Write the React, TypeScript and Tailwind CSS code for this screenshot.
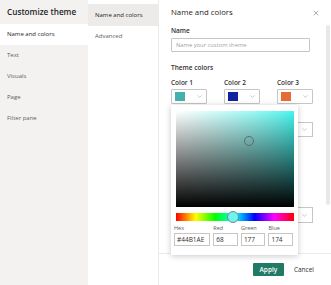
import { X, ChevronDown } from 'lucide-react'

const navItems = ['Name and colors', 'Text', 'Visuals', 'Page', 'Filter pane']

function ColorButton({ label, color }: { label: string; color: string }) {
  return (
    <div className="w-[36px]">
      <div className="h-[10px] flex items-center text-[6.5px] font-semibold text-[#323130] whitespace-nowrap">{label}</div>
      <div className="mt-[1px] h-[15px] border border-[#c8c6c4] rounded-[1px] flex items-center pl-[3px] pr-[3px]">
        <div className={`w-[10px] h-[9px] ${color}`} />
        <ChevronDown className="ml-auto w-[7px] h-[7px] text-[#8a8886]" strokeWidth={1.5} />
      </div>
    </div>
  )
}

function ColorPopup() {
  return (
    <div className="absolute left-[12px] top-[105px] w-[127px] h-[150px] bg-white shadow-[0_1px_6px_rgba(0,0,0,0.22)] pt-[6px] px-[5px]">
      <div className="relative w-[118px] h-[96px] bg-linear-to-r from-white to-[#3ff5ef]">
        <div className="absolute inset-0 bg-linear-to-t from-black to-transparent" />
        <div className="absolute left-[68px] top-[25px] w-[10px] h-[10px] rounded-full border border-[#5f6b6b]" />
      </div>
      <div className="relative mt-[6px] w-[118px] h-[8px] bg-[linear-gradient(to_right,#ff0000,#ffff00,#00ff00,#00ffff,#0000ff,#ff00ff,#ff0000)]">
        <div className="absolute left-[51px] top-[-2px] w-[12px] h-[12px] rounded-full bg-[#6ef3ef] border border-[#7a8a8a]" />
      </div>
      <div className="ml-[-2px] mt-[3px] flex gap-[3px] text-[5.5px] text-[#605e5c]">
        <div className="w-[37px]">Hex</div>
        <div className="w-[25px]">Red</div>
        <div className="w-[25px]">Green</div>
        <div className="w-[25px]">Blue</div>
      </div>
      <div className="ml-[-2px] mt-[1px] flex gap-[3px] text-[6.5px] text-[#323130]">
        <div className="w-[37px] h-[13px] border border-[#c8c6c4] flex items-center pl-[2px]">#44B1AE</div>
        <div className="w-[25px] h-[13px] border border-[#c8c6c4] flex items-center pl-[2px]">68</div>
        <div className="w-[25px] h-[13px] border border-[#c8c6c4] flex items-center pl-[2px]">177</div>
        <div className="w-[25px] h-[13px] border border-[#c8c6c4] flex items-center pl-[2px]">174</div>
      </div>
    </div>
  )
}

export default function App() {
  return (
    <div className="w-[331px] h-[285px] flex bg-white text-[#323130] font-['Open_Sans',sans-serif] overflow-hidden">
      <div className="w-[88px] h-full bg-[#f3f2f1] flex flex-col">
        <div className="h-[24px] px-[7px] flex items-center text-[8.2px] font-semibold text-[#252423] whitespace-nowrap">Customize theme</div>
        {navItems.map((item, i) => (
          <div
            key={item}
            className={`h-[21px] px-[7px] flex items-center text-[6px] whitespace-nowrap ${i === 0 ? 'bg-white text-[#252423]' : 'text-[#605e5c]'}`}
          >
            {item}
          </div>
        ))}
      </div>

      <div className="w-[70px] h-full bg-white pt-[4px]">
        <div className="h-[22px] px-[7px] flex items-center bg-[#edebe9] text-[6px] text-[#252423] whitespace-nowrap">Name and colors</div>
        <div className="h-[21px] px-[7px] flex items-center text-[6px] text-[#605e5c]">Advanced</div>
      </div>

      <div className="relative flex-1 h-full border-l border-[#edebe9] flex flex-col">
        <div className="flex-1 flex min-h-0">
          <div className="flex-1 pl-[12px] pr-[2px]">
            <div className="h-[26px] flex items-center">
              <span className="text-[7.8px] text-[#252423] whitespace-nowrap">Name and colors</span>
              <X className="ml-auto mr-[4px] w-[8px] h-[8px] text-[#605e5c]" strokeWidth={1.5} />
            </div>
            <div className="h-[10px] flex items-center text-[6.5px] font-semibold">Name</div>
            <div className="mt-[2px] w-[139px] h-[14px] border border-[#c8c6c4] rounded-[1px] flex items-center px-[4px] text-[5.8px] text-[#a19f9d]">
              Name your custom theme
            </div>
            <div className="mt-[11px] h-[10px] flex items-center text-[6.5px] font-semibold">Theme colors</div>
            <div className="mt-[5px] flex gap-[17px]">
              <ColorButton label="Color 1" color="bg-[#44b1ae]" />
              <ColorButton label="Color 2" color="bg-[#12239e]" />
              <ColorButton label="Color 3" color="bg-[#e66c37]" />
            </div>
            <div className="mt-[18px] w-[142px] h-[15px] border border-[#c8c6c4] flex items-center justify-end pr-[4px]">
              <ChevronDown className="w-[7px] h-[7px] text-[#8a8886]" strokeWidth={1.5} />
            </div>
            <div className="mt-[70px] w-[142px] h-[16px] border border-[#c8c6c4] flex items-center justify-end pr-[4px]">
              <ChevronDown className="w-[7px] h-[7px] text-[#8a8886]" strokeWidth={1.5} />
            </div>
          </div>
          <div className="w-[4px] pt-[25px] mr-[1px]">
            <div className="h-[180px] rounded-full bg-[#e9e8e7]" />
          </div>
        </div>
        <div className="h-[32px] border-t border-[#edebe9] flex items-center justify-end gap-[10px] pr-[17px]">
          <div className="w-[31px] h-[13px] bg-[#217a66] text-white text-[6.5px] font-semibold flex items-center justify-center rounded-[1px]">Apply</div>
          <div className="text-[6.5px] text-[#323130]">Cancel</div>
        </div>
        <ColorPopup />
      </div>
    </div>
  )
}
